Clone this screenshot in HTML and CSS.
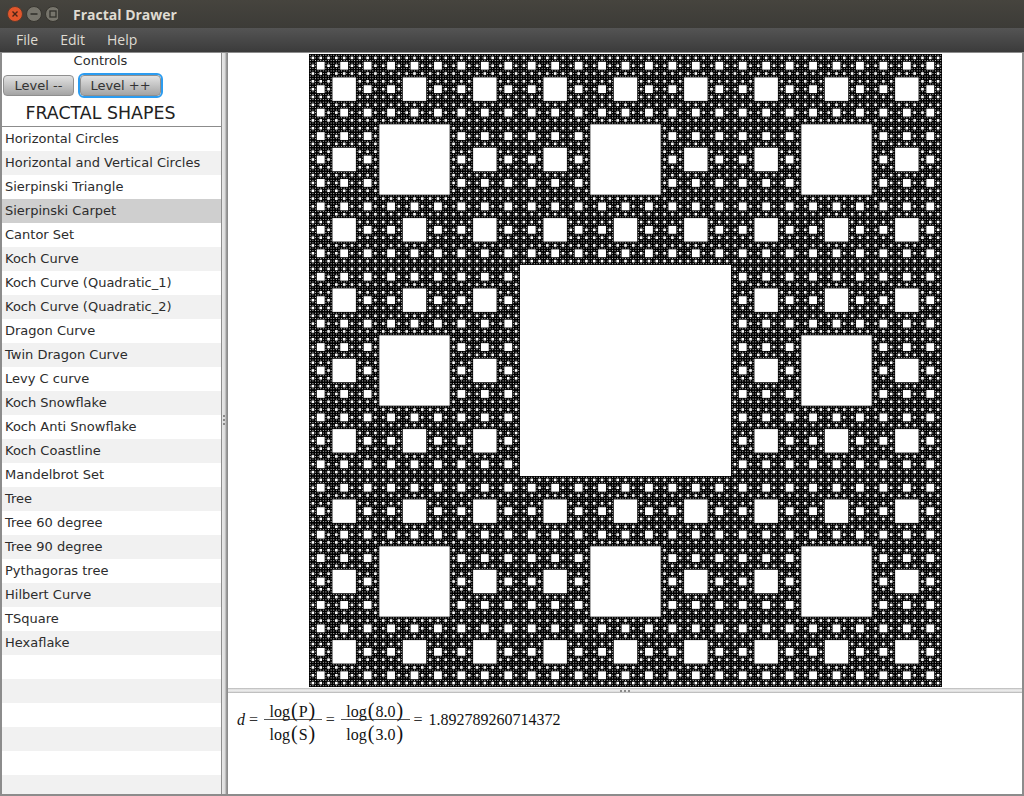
FILE: index.html
```html
<!DOCTYPE html>
<html lang="en">
<head>
    <meta charset="UTF-8">
    <title>Fractal Drawer</title>
    <link rel="stylesheet" href="styles.css">
</head>
<body>
    <div class="titlebar">
        <div class="win-buttons">
            <svg width="58" height="20" viewBox="0 0 58 20">
                <circle cx="15" cy="10" r="7.5" fill="#e2562b" stroke="#5a3a2c"/>
                <path d="M12.5 7.5l5 5M17.5 7.5l-5 5" stroke="#4a2416" stroke-width="1.4"/>
                <circle cx="34" cy="10" r="7.5" fill="#77756c" stroke="#37352f"/>
                <path d="M30.5 10h7" stroke="#33322d" stroke-width="1.6"/>
                <circle cx="53" cy="10" r="7.5" fill="#77756c" stroke="#37352f"/>
                <rect x="50" y="7" width="6" height="6" fill="none" stroke="#33322d" stroke-width="1.3"/>
            </svg>
        </div>
        <span class="title">Fractal Drawer</span>
    </div>
    <div class="menubar">
        <span>File</span>
        <span>Edit</span>
        <span>Help</span>
    </div>
    <div class="main">
        <div class="side">
            <div class="controls-label">Controls</div>
            <div class="controls">
                <button class="btn btn-down">Level --</button>
                <button class="btn btn-up">Level ++</button>
            </div>
            <h1>FRACTAL SHAPES</h1>
            <ul class="shapes">
                <li>Horizontal Circles</li>
                <li>Horizontal and Vertical Circles</li>
                <li>Sierpinski Triangle</li>
                <li class="selected">Sierpinski Carpet</li>
                <li>Cantor Set</li>
                <li>Koch Curve</li>
                <li>Koch Curve (Quadratic_1)</li>
                <li>Koch Curve (Quadratic_2)</li>
                <li>Dragon Curve</li>
                <li>Twin Dragon Curve</li>
                <li>Levy C curve</li>
                <li>Koch Snowflake</li>
                <li>Koch Anti Snowflake</li>
                <li>Koch Coastline</li>
                <li>Mandelbrot Set</li>
                <li>Tree</li>
                <li>Tree 60 degree</li>
                <li>Tree 90 degree</li>
                <li>Pythagoras tree</li>
                <li>Hilbert Curve</li>
                <li>TSquare</li>
                <li>Hexaflake</li>
                <li></li>
                <li></li>
                <li></li>
                <li></li>
                <li></li>
                <li></li>
            </ul>
        </div>
        <div class="vdivider"><i></i><i></i><i></i></div>
        <div class="right">
            <div class="drawing">
                <canvas id="carpet" width="633" height="633"></canvas>
            </div>
            <div class="hdivider"><i></i><i></i><i></i></div>
            <div class="formula">
                <span class="var">d</span>
                <span class="eq">=</span>
                <div class="frac">
                    <div class="top">log<b>(</b>P<b>)</b></div>
                    <div class="bottom">log<b>(</b>S<b>)</b></div>
                </div>
                <span class="eq">=</span>
                <div class="frac">
                    <div class="top">log<b>(</b>8.0<b>)</b></div>
                    <div class="bottom">log<b>(</b>3.0<b>)</b></div>
                </div>
                <span class="eq">=</span>
                <span class="value">1.892789260714372</span>
            </div>
        </div>
    </div>
    <script src="fractal.js"></script>
</body>
</html>
```

FILE: styles.css
```css
* {
    box-sizing: border-box;
}
html, body {
    margin: 0;
    height: 796px;
    overflow: hidden;
}
body {
    display: flex;
    flex-direction: column;
    font-family: "DejaVu Sans", sans-serif;
    font-size: 13px;
    color: #2c2c2c;
    background: #8c8c8c;
}
.titlebar {
    height: 28px;
    display: flex;
    align-items: center;
    background: linear-gradient(#46443e, #3c3b37);
}
.win-buttons {
    width: 73px;
    display: flex;
}
.win-buttons svg {
    display: block;
}
.title {
    font-family: "Open Sans", sans-serif;
    font-weight: 700;
    font-size: 14px;
    color: #dfdbd2;
}
.menubar {
    height: 24px;
    display: flex;
    align-items: center;
    gap: 22px;
    padding: 0 0 2px 16px;
    background: linear-gradient(#545454, #3b3b3b);
    font-family: "Open Sans", sans-serif;
    font-size: 14px;
    color: #dfdbd2;
}
.main {
    flex: 1;
    display: flex;
    min-height: 0;
    padding: 1px 2px 2px 2px;
    background: #8c8c8c;
}
.side {
    width: 219px;
    display: flex;
    flex-direction: column;
    background: #fff;
}
.controls-label {
    height: 16px;
    padding-right: 22px;
    text-align: center;
    line-height: 15px;
}
.controls {
    display: flex;
    align-items: center;
    gap: 4px;
    height: 24px;
    margin-top: 4px;
    padding-left: 1px;
}
.btn {
    height: 21px;
    padding: 0;
    font-family: "DejaVu Sans", sans-serif;
    font-size: 13px;
    color: #333;
    border: 1px solid #8f8f8f;
    border-radius: 4px;
    background: linear-gradient(#e2e2e2, #a4a4a4);
}
.btn-down {
    width: 71px;
}
.btn-up {
    width: 81px;
    margin-left: 2px;
    outline: 2px solid #2c9cf0;
    outline-offset: 0;
}
h1 {
    margin: 0;
    height: 29px;
    padding: 4px 22px 0 0;
    font-weight: 400;
    font-size: 17.4px;
    line-height: 24px;
    text-align: center;
    color: #222;
}
.shapes {
    flex: 1;
    min-height: 0;
    margin: 0 -1px;
    padding: 0;
    list-style: none;
    overflow: hidden;
    border: 1px solid #8c8c8c;
    border-bottom: none;
    background: #fff;
}
.shapes li {
    height: 24px;
    padding-left: 3px;
    line-height: 23px;
}
.shapes li:nth-child(even) {
    background: #f1f1f1;
}
.shapes li.selected {
    background: #cfcfcf;
}
.vdivider {
    width: 7px;
    display: flex;
    flex-direction: column;
    align-items: center;
    justify-content: center;
    gap: 2px;
    padding: 0 1px 8px 0;
    background: linear-gradient(90deg, #8c8c8c 1px, #e8e8e8 1px, #dadada 4px, #a5a5a5 5px, #8c8c8c 6px);
}
.vdivider i, .hdivider i {
    display: block;
    width: 2px;
    height: 2px;
    background: #8a8a8a;
}
.right {
    flex: 1;
    min-width: 0;
    display: flex;
    flex-direction: column;
}
.drawing {
    height: 635px;
    padding: 1px 0 0 1px;
    display: flex;
    justify-content: center;
    background: #fff;
    overflow: hidden;
}
#carpet {
    display: block;
    width: 633px;
    height: 633px;
    filter: blur(0.4px);
}
.hdivider {
    height: 5px;
    display: flex;
    justify-content: center;
    align-items: center;
    gap: 2px;
    background: linear-gradient(#b5b5b5, #f0f0f0 2px, #dadada 4px, #a5a5a5);
}
.formula {
    flex: 1;
    display: flex;
    align-items: center;
    padding: 0 0 47px 9px;
    background: #fff;
    font-family: "Liberation Serif", serif;
    font-size: 16px;
    color: #111;
}
.var {
    font-style: italic;
}
.eq {
    margin: 0 6px 0 4px;
    color: #333;
}
.frac {
    display: flex;
    flex-direction: column;
    text-align: center;
}
.frac .top {
    height: 21px;
    line-height: 22px;
    padding: 0 5.5px;
    border-bottom: 1px solid #555;
}
.frac .bottom {
    height: 22px;
    line-height: 26px;
    padding: 0 5.5px;
}
.frac b {
    font-weight: 400;
    font-size: 20px;
    margin: 0 1px;
}
```

FILE: fractal.js
```js
// Sierpinski carpet, level 6
const canvas = document.getElementById('carpet');
const ctx = canvas.getContext('2d');

ctx.fillStyle = '#000';
ctx.fillRect(0, 0, canvas.width, canvas.height);
ctx.fillStyle = '#fff';

function carpet(x, y, size, level) {
    if (level === 0) return;
    const s = size / 3;
    ctx.fillRect(x + s, y + s, s, s);
    for (let i = 0; i < 3; i++) {
        for (let j = 0; j < 3; j++) {
            if (i === 1 && j === 1) continue;
            carpet(x + i * s, y + j * s, s, level - 1);
        }
    }
}

carpet(0, 0, canvas.width, 6);
```
